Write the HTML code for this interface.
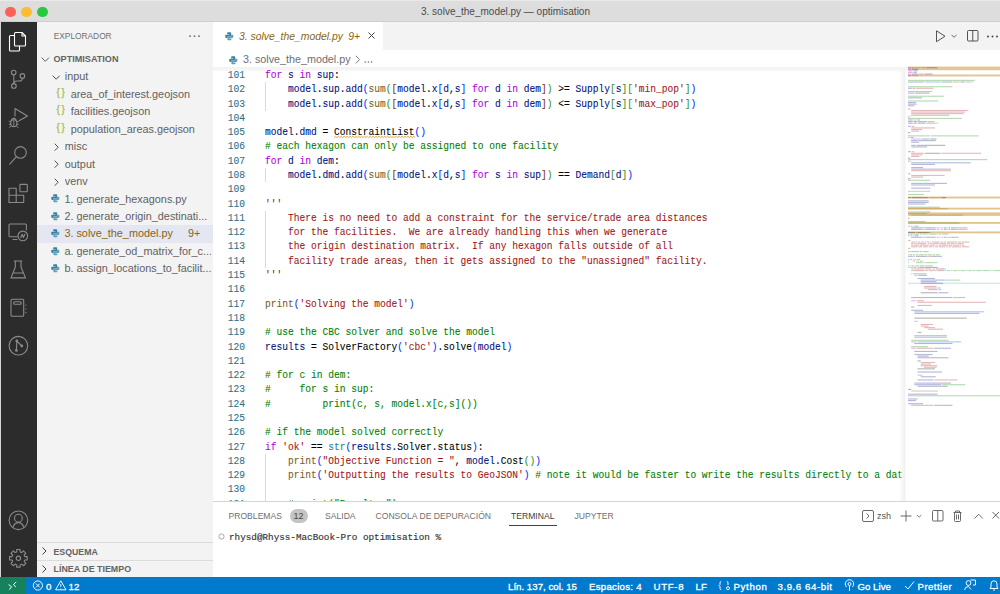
<!DOCTYPE html>
<html><head><meta charset="utf-8">
<style>
*{margin:0;padding:0;box-sizing:border-box}
html,body{width:1000px;height:594px;overflow:hidden;background:#fff;font-family:"Liberation Sans",sans-serif}
.a{position:absolute}
.t{position:absolute;white-space:pre;line-height:1}
svg{position:absolute;overflow:visible}
.ln{position:absolute;width:32px;transform:scaleY(1.15);-webkit-text-stroke:0.08px currentColor;text-align:right;color:#2d7088;font-family:"Liberation Mono",monospace;font-size:9.58px;line-height:14.29px;height:14.29px;white-space:pre}
.cl{position:absolute;transform:scaleY(1.15);-webkit-text-stroke:0.08px currentColor;color:#000;font-family:"Liberation Mono",monospace;font-size:9.58px;line-height:14.29px;height:14.29px;white-space:pre}
.k{color:#af00db}.v{color:#001080}.f{color:#795e26}.s{color:#a31515}.c{color:#008000}.ty{color:#267f99}
.b1{color:#0431fa}.b2{color:#319331}.b3{color:#7b3814}
.sq{text-decoration:underline wavy #bf8803;text-decoration-thickness:1px;text-underline-offset:2px}
.si{position:absolute;left:0;width:176px;height:17.46px;line-height:17.46px;font-size:10.85px;color:#616161;white-space:pre}
.st{position:absolute;top:0.6px;height:17px;line-height:17px;font-size:9.7px;color:#fff;white-space:pre;-webkit-text-stroke:0.3px #fff}
.pt{position:absolute;top:0;line-height:1;font-size:8.6px;color:#6f6f6f;white-space:pre}
</style></head><body>
<!-- title bar -->
<div class="a" style="left:0;top:0;width:1000px;height:22px;background:#dddddd;border-bottom:1px solid #cfcfcf"></div>
<div class="a" style="left:0;top:0;width:1000px;height:1px;background:#e9e9e9"></div>
<div class="a" style="left:5px;top:6.5px;width:10.5px;height:10.5px;border-radius:50%;background:#fe5f57"></div>
<div class="a" style="left:21px;top:6.5px;width:10.5px;height:10.5px;border-radius:50%;background:#febc2e"></div>
<div class="a" style="left:37px;top:6.5px;width:10.5px;height:10.5px;border-radius:50%;background:#28c840"></div>
<div class="t" style="left:421px;top:6.5px;font-size:10px;color:#4a4a4a">3. solve_the_model.py — optimisation</div>

<!-- activity bar -->
<div class="a" style="left:0;top:22px;width:37px;height:555px;background:#2c2c2c"></div>
<svg width="37" height="555" style="left:0;top:22px" fill="none" stroke-linecap="round" stroke-linejoin="round">
 <!-- explorer -->
 <g stroke="#ffffff" stroke-width="1.1">
  <path d="M14.5 13.5 H10.5 Q9.5 13.5 9.5 14.5 V28 Q9.5 29 10.5 29 H18.5 Q19.5 29 19.5 28 V24"/>
  <path d="M15.5 10.5 Q14.5 10.5 14.5 11.5 V23 Q14.5 24 15.5 24 H24.5 Q25.5 24 25.5 23 V14 L22 10.5 Z"/>
  <path d="M22 10.5 V14 H25.5"/>
 </g>
 <g stroke="#8b8b8b" stroke-width="1.1">
  <!-- source control y offset 22 -->
  <circle cx="13.7" cy="50.5" r="2.3"/><circle cx="22.4" cy="53.9" r="2.3"/><circle cx="13.9" cy="63.9" r="2.3"/>
  <path d="M13.8 52.8 V61.6"/><path d="M22.4 56.2 Q22.4 59 19 59 H16.5 Q14 59 13.9 61.5"/>
  <!-- run debug -->
  <path d="M15 94 V86.5 L27.4 94 L19.5 98.6"/>
  <path d="M11.6 97.6 Q13.8 95.2 16 97.6"/><ellipse cx="13.8" cy="101.2" rx="3.1" ry="3.5"/><path d="M9.2 99.3 H10.7 M16.9 99.3 H18.4 M9.2 102.3 H10.7 M16.9 102.3 H18.4 M10.8 104.3 L9.6 105.5 M16.8 104.3 L18 105.5 M13.8 98.5 V104.5" stroke-width="0.9"/>
  <!-- search -->
  <circle cx="20.5" cy="130.4" r="5.8"/><path d="M16.4 134.6 L9.8 142.2"/>
  <!-- extensions -->
  <path d="M9 166.2 H16.2 V173.2 H23.7 V180.5 H9 Z M9 173.2 H16.2 V180.5"/>
  <rect x="19.9" y="162.4" width="7.4" height="7.4" rx="0.8"/>
  <!-- remote explorer -->
  <path d="M17.5 214.8 H10 Q9 214.8 9 213.8 V203 Q9 202 10 202 H25.4 Q26.4 202 26.4 203 V208"/>
  <path d="M13 217.5 H17"/>
  <circle cx="22.8" cy="213.9" r="4.8"/><path d="M20.8 215.5 L22.2 212.2 L23.4 215.5 L24.8 212.2"/>
  <!-- testing -->
  <path d="M14.3 239 H21.8 M15.3 239 V245 L11 255.9 H25.5 L21 245 V239 M12.8 251 H23.5"/>
  <!-- notebook -->
  <rect x="11" y="277.3" width="12.7" height="16.9" rx="1.3"/><rect x="13.7" y="279.8" width="7.5" height="2.5" rx="1"/>
  <path d="M25.9 283 V283.3 M25.9 286.7 V287 M25.9 290.4 V290.7"/>
  <!-- graph -->
  <circle cx="18.4" cy="323.7" r="9.3"/><path d="M16.8 319 L16.4 328.4 M16.8 319 L21.8 324"/>
 </g>
 <g fill="#8b8b8b"><circle cx="16.8" cy="319" r="1.4"/><circle cx="21.8" cy="324" r="1.4"/><circle cx="16.4" cy="328.4" r="1.4"/></g>
 <g stroke="#8b8b8b" stroke-width="1.1">
  <!-- accounts -->
  <circle cx="18.4" cy="498.3" r="9.3"/><circle cx="18.4" cy="496.2" r="3.9"/><path d="M13.2 504.8 Q14.5 500.6 18.4 500.6 Q22.3 500.6 23.6 504.8"/>
  <!-- gear -->
  <path id="gear" d="M24.50 533.77 L24.78 534.59 L27.23 534.58 L27.23 538.02 L24.78 538.01 L24.50 538.83 L24.12 539.60 L25.86 541.33 L23.43 543.76 L21.70 542.02 L20.93 542.40 L20.11 542.68 L20.12 545.13 L16.68 545.13 L16.69 542.68 L15.87 542.40 L15.10 542.02 L13.37 543.76 L10.94 541.33 L12.68 539.60 L12.30 538.83 L12.02 538.01 L9.57 538.02 L9.57 534.58 L12.02 534.59 L12.30 533.77 L12.68 533.00 L10.94 531.27 L13.37 528.84 L15.10 530.58 L15.87 530.20 L16.69 529.92 L16.68 527.47 L20.12 527.47 L20.11 529.92 L20.93 530.20 L21.70 530.58 L23.43 528.84 L25.86 531.27 L24.12 533.00 Z"/>
  <circle cx="18.4" cy="536.3" r="2.2"/>
 </g>
</svg>

<div class="a" style="left:0;top:22px;width:1px;height:555px;background:#d6d6d6"></div>
<!-- sidebar -->
<div class="a" style="left:37px;top:22px;width:176px;height:555px;background:#f3f3f3;overflow:hidden">
 <div class="t" style="left:16.7px;top:9.6px;font-size:8.35px;color:#6f6f6f">EXPLORADOR</div>
 <svg width="20" height="6" style="left:151px;top:12.5px"><g fill="#6f6f6f"><circle cx="2" cy="1.2" r="0.9"/><circle cx="6.5" cy="1.2" r="0.9"/><circle cx="11" cy="1.2" r="0.9"/></g></svg>
 <!-- OPTIMISATION header -->
 <svg width="12" height="7" style="left:4.3px;top:34.6px" fill="none" stroke="#555" stroke-width="0.95"><path d="M0.6 0.6 L4.3 4.3 L8 0.6"/></svg>
 <div class="t" style="left:16.5px;top:32.5px;font-size:9.1px;font-weight:bold;color:#636363">OPTIMISATION</div>
 <!-- rows start at 45.3 (67.3 abs) -->
 <div class="a" style="left:0;top:202.9px;width:176px;height:17.9px;background:#e4e6f1"></div>
 <svg width="10" height="8" style="left:15px;top:53.10px" fill="none" stroke="#424242" stroke-width="0.95"><path d="M0.7 0.7 L4.2 4.2 L7.7 0.7"/></svg>
<div class="si" style="left:27.8px;top:46.30px;width:146.2px;color:#616161;overflow:hidden">input</div>
<div class="t" style="left:19.6px;top:65.96px;font-size:10px;color:#a9b94e;letter-spacing:1.6px;-webkit-text-stroke:0.25px #a9b94e">{}</div>
<div class="si" style="left:33.7px;top:63.76px;width:140.3px;color:#616161;overflow:hidden">area_of_interest.geojson</div>
<div class="t" style="left:19.6px;top:83.42px;font-size:10px;color:#a9b94e;letter-spacing:1.6px;-webkit-text-stroke:0.25px #a9b94e">{}</div>
<div class="si" style="left:33.7px;top:81.22px;width:140.3px;color:#616161;overflow:hidden">facilities.geojson</div>
<div class="t" style="left:19.6px;top:100.88000000000001px;font-size:10px;color:#a9b94e;letter-spacing:1.6px;-webkit-text-stroke:0.25px #a9b94e">{}</div>
<div class="si" style="left:33.7px;top:98.68px;width:140.3px;color:#616161;overflow:hidden">population_areas.geojson</div>
<svg width="8" height="10" style="left:16.5px;top:120.74px" fill="none" stroke="#424242" stroke-width="0.95"><path d="M0.7 0.7 L4.2 4.2 L0.7 7.7"/></svg>
<div class="si" style="left:27.8px;top:116.14px;width:146.2px;color:#616161;overflow:hidden">misc</div>
<svg width="8" height="10" style="left:16.5px;top:138.20px" fill="none" stroke="#424242" stroke-width="0.95"><path d="M0.7 0.7 L4.2 4.2 L0.7 7.7"/></svg>
<div class="si" style="left:27.8px;top:133.60px;width:146.2px;color:#616161;overflow:hidden">output</div>
<svg width="8" height="10" style="left:16.5px;top:155.66px" fill="none" stroke="#424242" stroke-width="0.95"><path d="M0.7 0.7 L4.2 4.2 L0.7 7.7"/></svg>
<div class="si" style="left:27.8px;top:151.06px;width:146.2px;color:#616161;overflow:hidden">venv</div>
<svg width="8.6" height="8.6" viewBox="0 0 16 16" style="left:13.6px;top:172.11999999999998px"><path fill="#3a82a0" d="M5.5 0.5 H10 Q11.5 0.5 11.5 2 V6.5 Q11.5 8 10 8 H6 Q4.5 8 4.5 9.5 V11 H2 Q0.5 11 0.5 9.5 V6.5 Q0.5 5 2 5 H8 V4 H4 V2 Q4 0.5 5.5 0.5 Z"/><path fill="#5e9fba" d="M10.5 15.5 H6 Q4.5 15.5 4.5 14 V9.5 Q4.5 8 6 8 H10 Q11.5 8 11.5 6.5 V5 H14 Q15.5 5 15.5 6.5 V9.5 Q15.5 11 14 11 H8 V12 H12 V14 Q12 15.5 10.5 15.5 Z"/></svg>
<div class="si" style="left:27.4px;top:168.52px;width:146.6px;color:#616161;overflow:hidden">1. generate_hexagons.py</div>
<svg width="8.6" height="8.6" viewBox="0 0 16 16" style="left:13.6px;top:189.58px"><path fill="#3a82a0" d="M5.5 0.5 H10 Q11.5 0.5 11.5 2 V6.5 Q11.5 8 10 8 H6 Q4.5 8 4.5 9.5 V11 H2 Q0.5 11 0.5 9.5 V6.5 Q0.5 5 2 5 H8 V4 H4 V2 Q4 0.5 5.5 0.5 Z"/><path fill="#5e9fba" d="M10.5 15.5 H6 Q4.5 15.5 4.5 14 V9.5 Q4.5 8 6 8 H10 Q11.5 8 11.5 6.5 V5 H14 Q15.5 5 15.5 6.5 V9.5 Q15.5 11 14 11 H8 V12 H12 V14 Q12 15.5 10.5 15.5 Z"/></svg>
<div class="si" style="left:27.4px;top:185.98px;width:146.6px;color:#616161;overflow:hidden">2. generate_origin_destinati...</div>
<svg width="8.6" height="8.6" viewBox="0 0 16 16" style="left:13.6px;top:207.04px"><path fill="#3a82a0" d="M5.5 0.5 H10 Q11.5 0.5 11.5 2 V6.5 Q11.5 8 10 8 H6 Q4.5 8 4.5 9.5 V11 H2 Q0.5 11 0.5 9.5 V6.5 Q0.5 5 2 5 H8 V4 H4 V2 Q4 0.5 5.5 0.5 Z"/><path fill="#5e9fba" d="M10.5 15.5 H6 Q4.5 15.5 4.5 14 V9.5 Q4.5 8 6 8 H10 Q11.5 8 11.5 6.5 V5 H14 Q15.5 5 15.5 6.5 V9.5 Q15.5 11 14 11 H8 V12 H12 V14 Q12 15.5 10.5 15.5 Z"/></svg>
<div class="si" style="left:27.4px;top:203.44px;width:146.6px;color:#876515;overflow:hidden">3. solve_the_model.py</div>
<div class="si" style="left:151px;top:203.44px;width:20px;color:#876515">9+</div>
<svg width="8.6" height="8.6" viewBox="0 0 16 16" style="left:13.6px;top:224.50000000000003px"><path fill="#3a82a0" d="M5.5 0.5 H10 Q11.5 0.5 11.5 2 V6.5 Q11.5 8 10 8 H6 Q4.5 8 4.5 9.5 V11 H2 Q0.5 11 0.5 9.5 V6.5 Q0.5 5 2 5 H8 V4 H4 V2 Q4 0.5 5.5 0.5 Z"/><path fill="#5e9fba" d="M10.5 15.5 H6 Q4.5 15.5 4.5 14 V9.5 Q4.5 8 6 8 H10 Q11.5 8 11.5 6.5 V5 H14 Q15.5 5 15.5 6.5 V9.5 Q15.5 11 14 11 H8 V12 H12 V14 Q12 15.5 10.5 15.5 Z"/></svg>
<div class="si" style="left:27.4px;top:220.90px;width:146.6px;color:#616161;overflow:hidden">a. generate_od_matrix_for_c...</div>
<svg width="8.6" height="8.6" viewBox="0 0 16 16" style="left:13.6px;top:241.96px"><path fill="#3a82a0" d="M5.5 0.5 H10 Q11.5 0.5 11.5 2 V6.5 Q11.5 8 10 8 H6 Q4.5 8 4.5 9.5 V11 H2 Q0.5 11 0.5 9.5 V6.5 Q0.5 5 2 5 H8 V4 H4 V2 Q4 0.5 5.5 0.5 Z"/><path fill="#5e9fba" d="M10.5 15.5 H6 Q4.5 15.5 4.5 14 V9.5 Q4.5 8 6 8 H10 Q11.5 8 11.5 6.5 V5 H14 Q15.5 5 15.5 6.5 V9.5 Q15.5 11 14 11 H8 V12 H12 V14 Q12 15.5 10.5 15.5 Z"/></svg>
<div class="si" style="left:27.4px;top:238.36px;width:146.6px;color:#616161;overflow:hidden">b. assign_locations_to_facilit...</div>
 <!-- bottom sections -->
 <div class="a" style="left:0;top:519.5px;width:176px;height:1px;background:#dcdcdc"></div>
 <svg width="10" height="10" style="left:5px;top:525px" fill="none" stroke="#424242" stroke-width="1"><path d="M0.5 0.5 L4 4 L0.5 7.5"/></svg>
 <div class="t" style="left:16.5px;top:525.5px;font-size:8.75px;font-weight:bold;color:#636363">ESQUEMA</div>
 <div class="a" style="left:0;top:537.5px;width:176px;height:1px;background:#dcdcdc"></div>
 <svg width="10" height="10" style="left:5px;top:542.5px" fill="none" stroke="#424242" stroke-width="1"><path d="M0.5 0.5 L4 4 L0.5 7.5"/></svg>
 <div class="t" style="left:16.5px;top:543px;font-size:8.9px;font-weight:bold;color:#636363">LÍNEA DE TIEMPO</div>
</div>

<!-- editor tabs -->
<div class="a" style="left:213px;top:22px;width:787px;height:28px;background:#f3f3f3"></div>
<div class="a" style="left:213px;top:22px;width:170px;height:28px;background:#ffffff"></div>
<svg width="8.6" height="8.6" viewBox="0 0 16 16" style="left:224.5px;top:32.3px"><path fill="#3a82a0" d="M5.5 0.5 H10 Q11.5 0.5 11.5 2 V6.5 Q11.5 8 10 8 H6 Q4.5 8 4.5 9.5 V11 H2 Q0.5 11 0.5 9.5 V6.5 Q0.5 5 2 5 H8 V4 H4 V2 Q4 0.5 5.5 0.5 Z"/><path fill="#5e9fba" d="M10.5 15.5 H6 Q4.5 15.5 4.5 14 V9.5 Q4.5 8 6 8 H10 Q11.5 8 11.5 6.5 V5 H14 Q15.5 5 15.5 6.5 V9.5 Q15.5 11 14 11 H8 V12 H12 V14 Q12 15.5 10.5 15.5 Z"/></svg>
<div class="t" style="left:239px;top:32px;font-size:10.4px;font-style:italic;color:#876515">3. solve_the_model.py</div>
<div class="t" style="left:348.3px;top:32px;font-size:10.4px;font-style:italic;color:#876515">9+</div>
<svg width="8" height="8" style="left:368px;top:32.2px" fill="none" stroke="#424242" stroke-width="1"><path d="M0.5 0.5 L6.5 6.5 M6.5 0.5 L0.5 6.5"/></svg>
<!-- editor actions -->
<svg width="70" height="16" style="left:930px;top:28px" fill="none" stroke="#4a4a4a" stroke-width="0.95">
 <path d="M6.5 2.8 V13.7 L15 8.25 Z"/>
 <path d="M21.5 6.8 L24 9.3 L26.5 6.8" stroke-width="0.8"/>
 <rect x="37.5" y="2.5" width="10.5" height="10.5" rx="1"/><path d="M42.75 2.5 V13"/>
</svg>
<svg width="14" height="4" style="left:986px;top:34.5px"><g fill="#424242"><circle cx="2" cy="1.5" r="0.95"/><circle cx="6.5" cy="1.5" r="0.95"/><circle cx="11" cy="1.5" r="0.95"/></g></svg>
<!-- breadcrumbs -->
<div class="a" style="left:213px;top:50px;width:787px;height:17px;background:#fff"></div>
<svg width="8.6" height="8.6" viewBox="0 0 16 16" style="left:229px;top:55.5px"><path fill="#3a82a0" d="M5.5 0.5 H10 Q11.5 0.5 11.5 2 V6.5 Q11.5 8 10 8 H6 Q4.5 8 4.5 9.5 V11 H2 Q0.5 11 0.5 9.5 V6.5 Q0.5 5 2 5 H8 V4 H4 V2 Q4 0.5 5.5 0.5 Z"/><path fill="#5e9fba" d="M10.5 15.5 H6 Q4.5 15.5 4.5 14 V9.5 Q4.5 8 6 8 H10 Q11.5 8 11.5 6.5 V5 H14 Q15.5 5 15.5 6.5 V9.5 Q15.5 11 14 11 H8 V12 H12 V14 Q12 15.5 10.5 15.5 Z"/></svg>
<div class="t" style="left:243px;top:54px;font-size:10.75px;color:#6e6e6e">3. solve_the_model.py</div>
<svg width="8" height="10" style="left:355px;top:55px" fill="none" stroke="#6e6e6e" stroke-width="0.9"><path d="M0.8 0.8 L4.6 4.6 L0.8 8.4"/></svg>
<svg width="10" height="3" style="left:364px;top:60.5px"><g fill="#6e6e6e"><circle cx="1.2" cy="1" r="0.8"/><circle cx="4.4" cy="1" r="0.8"/><circle cx="7.6" cy="1" r="0.8"/></g></svg>

<!-- code -->
<div class="a" style="left:213px;top:67px;width:692px;height:434px;overflow:hidden;background:#fff">
<div class="ln" style="left:0;top:2.00px">101</div>
<div class="cl" style="left:52px;top:2.00px"><span class="k">for</span> <span class="v">s</span> <span class="k">in</span> <span class="v">sup</span>:</div>
<div class="ln" style="left:0;top:16.29px">102</div>
<div class="a" style="left:52px;top:14.99px;width:1px;height:14.59px;background:#dadada"></div>
<div class="cl" style="left:52px;top:16.29px">    <span class="v">model</span>.<span class="v">sup</span>.<span class="v">add</span><span class="b1">(</span><span class="f">sum</span><span class="b2">(</span><span class="b3">[</span><span class="v">model</span>.<span class="v">x</span><span class="b1">[</span><span class="v">d</span>,<span class="v">s</span><span class="b1">]</span> <span class="k">for</span> <span class="v">d</span> <span class="k">in</span> <span class="v">dem</span><span class="b3">]</span><span class="b2">)</span> &gt;= <span class="v">Supply</span><span class="b2">[</span><span class="v">s</span><span class="b2">]</span><span class="b2">[</span><span class="s">'min_pop'</span><span class="b2">]</span><span class="b1">)</span></div>
<div class="ln" style="left:0;top:30.58px">103</div>
<div class="a" style="left:52px;top:29.28px;width:1px;height:14.59px;background:#dadada"></div>
<div class="cl" style="left:52px;top:30.58px">    <span class="v">model</span>.<span class="v">sup</span>.<span class="v">add</span><span class="b1">(</span><span class="f">sum</span><span class="b2">(</span><span class="b3">[</span><span class="v">model</span>.<span class="v">x</span><span class="b1">[</span><span class="v">d</span>,<span class="v">s</span><span class="b1">]</span> <span class="k">for</span> <span class="v">d</span> <span class="k">in</span> <span class="v">dem</span><span class="b3">]</span><span class="b2">)</span> &lt;= <span class="v">Supply</span><span class="b2">[</span><span class="v">s</span><span class="b2">]</span><span class="b2">[</span><span class="s">'max_pop'</span><span class="b2">]</span><span class="b1">)</span></div>
<div class="ln" style="left:0;top:44.87px">104</div>
<div class="cl" style="left:52px;top:44.87px"></div>
<div class="ln" style="left:0;top:59.16px">105</div>
<div class="cl" style="left:52px;top:59.16px"><span class="v">model</span>.<span class="v">dmd</span> = ConstraintList<span class="b1">()</span></div>
<div class="ln" style="left:0;top:73.45px">106</div>
<div class="cl" style="left:52px;top:73.45px"><span class="c"># each hexagon can only be assigned to one facility</span></div>
<div class="ln" style="left:0;top:87.74px">107</div>
<div class="cl" style="left:52px;top:87.74px"><span class="k">for</span> <span class="v">d</span> <span class="k">in</span> <span class="v">dem</span>:</div>
<div class="ln" style="left:0;top:102.03px">108</div>
<div class="a" style="left:52px;top:100.73px;width:1px;height:14.59px;background:#dadada"></div>
<div class="cl" style="left:52px;top:102.03px">    <span class="v">model</span>.<span class="v">dmd</span>.<span class="v">add</span><span class="b1">(</span><span class="f">sum</span><span class="b2">(</span><span class="b3">[</span><span class="v">model</span>.<span class="v">x</span><span class="b1">[</span><span class="v">d</span>,<span class="v">s</span><span class="b1">]</span> <span class="k">for</span> <span class="v">s</span> <span class="k">in</span> <span class="v">sup</span><span class="b3">]</span><span class="b2">)</span> == <span class="v">Demand</span><span class="b2">[</span><span class="v">d</span><span class="b2">]</span><span class="b1">)</span></div>
<div class="ln" style="left:0;top:116.32px">109</div>
<div class="cl" style="left:52px;top:116.32px"></div>
<div class="ln" style="left:0;top:130.61px">110</div>
<div class="cl" style="left:52px;top:130.61px"><span class="s">'''</span></div>
<div class="ln" style="left:0;top:144.90px">111</div>
<div class="a" style="left:52px;top:143.60px;width:1px;height:14.59px;background:#dadada"></div>
<div class="cl" style="left:52px;top:144.90px"><span class="s">    There is no need to add a constraint for the service/trade area distances</span></div>
<div class="ln" style="left:0;top:159.19px">112</div>
<div class="a" style="left:52px;top:157.89px;width:1px;height:14.59px;background:#dadada"></div>
<div class="cl" style="left:52px;top:159.19px"><span class="s">    for the facilities.  We are already handling this when we generate</span></div>
<div class="ln" style="left:0;top:173.48px">113</div>
<div class="a" style="left:52px;top:172.18px;width:1px;height:14.59px;background:#dadada"></div>
<div class="cl" style="left:52px;top:173.48px"><span class="s">    the origin destination matrix.  If any hexagon falls outside of all</span></div>
<div class="ln" style="left:0;top:187.77px">114</div>
<div class="a" style="left:52px;top:186.47px;width:1px;height:14.59px;background:#dadada"></div>
<div class="cl" style="left:52px;top:187.77px"><span class="s">    facility trade areas, then it gets assigned to the "unassigned" facility.</span></div>
<div class="ln" style="left:0;top:202.06px">115</div>
<div class="cl" style="left:52px;top:202.06px"><span class="s">'''</span></div>
<div class="ln" style="left:0;top:216.35px">116</div>
<div class="cl" style="left:52px;top:216.35px"></div>
<div class="ln" style="left:0;top:230.64px">117</div>
<div class="cl" style="left:52px;top:230.64px"><span class="f">print</span><span class="b1">(</span><span class="s">'Solving the model'</span><span class="b1">)</span></div>
<div class="ln" style="left:0;top:244.93px">118</div>
<div class="cl" style="left:52px;top:244.93px"></div>
<div class="ln" style="left:0;top:259.22px">119</div>
<div class="cl" style="left:52px;top:259.22px"><span class="c"># use the CBC solver and solve the model</span></div>
<div class="ln" style="left:0;top:273.51px">120</div>
<div class="cl" style="left:52px;top:273.51px"><span class="v">results</span> = SolverFactory<span class="b1">(</span><span class="s">'cbc'</span><span class="b1">)</span>.solve<span class="b1">(</span><span class="v">model</span><span class="b1">)</span></div>
<div class="ln" style="left:0;top:287.80px">121</div>
<div class="cl" style="left:52px;top:287.80px"></div>
<div class="ln" style="left:0;top:302.09px">122</div>
<div class="cl" style="left:52px;top:302.09px"><span class="c"># for c in dem:</span></div>
<div class="ln" style="left:0;top:316.38px">123</div>
<div class="cl" style="left:52px;top:316.38px"><span class="c">#     for s in sup:</span></div>
<div class="ln" style="left:0;top:330.67px">124</div>
<div class="cl" style="left:52px;top:330.67px"><span class="c">#         print(c, s, model.x[c,s]())</span></div>
<div class="ln" style="left:0;top:344.96px">125</div>
<div class="cl" style="left:52px;top:344.96px"></div>
<div class="ln" style="left:0;top:359.25px">126</div>
<div class="cl" style="left:52px;top:359.25px"><span class="c"># if the model solved correctly</span></div>
<div class="ln" style="left:0;top:373.54px">127</div>
<div class="cl" style="left:52px;top:373.54px"><span class="k">if</span> <span class="s">'ok'</span> == <span class="ty">str</span><span class="b1">(</span><span class="v">results</span>.Solver.status<span class="b1">)</span>:</div>
<div class="ln" style="left:0;top:387.83px">128</div>
<div class="a" style="left:52px;top:386.53px;width:1px;height:14.59px;background:#dadada"></div>
<div class="cl" style="left:52px;top:387.83px">    <span class="f">print</span><span class="b1">(</span><span class="s">"Objective Function = "</span>, <span class="v">model</span>.Cost<span class="b2">()</span><span class="b1">)</span></div>
<div class="ln" style="left:0;top:402.12px">129</div>
<div class="a" style="left:52px;top:400.82px;width:1px;height:14.59px;background:#dadada"></div>
<div class="cl" style="left:52px;top:402.12px">    <span class="f">print</span><span class="b1">(</span><span class="s">'Outputting the results to GeoJSON'</span><span class="b1">)</span> <span class="c"># note it would be faster to write the results directly to a database</span></div>
<div class="ln" style="left:0;top:416.41px">130</div>
<div class="a" style="left:52px;top:415.11px;width:1px;height:14.59px;background:#dadada"></div>
<div class="cl" style="left:52px;top:416.41px"></div>
<div class="ln" style="left:0;top:430.70px">131</div>
<div class="a" style="left:52px;top:429.40px;width:1px;height:14.59px;background:#dadada"></div>
<div class="cl" style="left:52px;top:430.70px">    <span class="c"># print("Results:")</span></div>
<svg width="84" height="3" style="left:121px;top:68.9px" fill="none"><polyline points="0.00,1.6 1.45,0.2 2.90,1.6 4.35,0.2 5.80,1.6 7.25,0.2 8.70,1.6 10.15,0.2 11.60,1.6 13.05,0.2 14.50,1.6 15.95,0.2 17.40,1.6 18.85,0.2 20.30,1.6 21.75,0.2 23.20,1.6 24.65,0.2 26.10,1.6 27.55,0.2 29.00,1.6 30.45,0.2 31.90,1.6 33.35,0.2 34.80,1.6 36.25,0.2 37.70,1.6 39.15,0.2 40.60,1.6 42.05,0.2 43.50,1.6 44.95,0.2 46.40,1.6 47.85,0.2 49.30,1.6 50.75,0.2 52.20,1.6 53.65,0.2 55.10,1.6 56.55,0.2 58.00,1.6 59.45,0.2 60.90,1.6 62.35,0.2 63.80,1.6 65.25,0.2 66.70,1.6 68.15,0.2 69.60,1.6 71.05,0.2 72.50,1.6 73.95,0.2 75.40,1.6 76.85,0.2 78.30,1.6 79.75,0.2 81.20,1.6" stroke="#e0a444" stroke-width="1"/></svg>
</div>
<div class="a" style="left:213px;top:66.5px;width:787px;height:5px;background:linear-gradient(rgba(0,0,0,0.05),rgba(0,0,0,0.035) 60%,rgba(0,0,0,0))"></div>
<!-- minimap -->
<div class="a" style="left:899px;top:67px;width:7px;height:434px;background:linear-gradient(to right,rgba(255,255,255,0),rgba(244,244,244,0.9) 60%,rgba(240,240,240,1) 85%,rgba(255,255,255,0))"></div>
<svg width="92" height="434" style="left:907.8px;top:67.2px">
<rect x="0" y="-0.40" width="92.2" height="1.89" fill="#e2c48e"/>
<rect x="0" y="1.19" width="92.2" height="1.89" fill="#e2c48e"/>
<rect x="0" y="7.52" width="92.2" height="1.89" fill="#e2c48e"/>
<rect x="0" y="129.57" width="92.2" height="1.89" fill="#e2c48e"/>
<rect x="0" y="140.66" width="92.2" height="1.89" fill="#e2c48e"/>
<rect x="0" y="145.42" width="92.2" height="1.89" fill="#e2c48e"/>
<rect x="0" y="147.00" width="92.2" height="1.89" fill="#e2c48e"/>
<rect x="0" y="154.93" width="92.2" height="1.89" fill="#e2c48e"/>
<rect x="0" y="164.44" width="92.2" height="1.89" fill="#e2c48e"/>
<rect x="0" y="215.56" width="92.2" height="1.58" fill="#dce6f3"/>
<rect x="0.00" y="0.15" width="3.18" height="1.1" fill="#af00db" fill-opacity="0.3"/>
<rect x="3.97" y="0.15" width="0.79" height="1.1" fill="#000000" fill-opacity="0.3"/>
<rect x="5.56" y="0.15" width="7.94" height="1.1" fill="#9a6a00" fill-opacity="0.3"/>
<rect x="14.29" y="0.15" width="3.18" height="1.1" fill="#af00db" fill-opacity="0.3"/>
<rect x="18.26" y="0.15" width="11.12" height="1.1" fill="#001080" fill-opacity="0.3"/>
<rect x="0.00" y="1.73" width="3.18" height="1.1" fill="#af00db" fill-opacity="0.3"/>
<rect x="3.97" y="1.73" width="6.35" height="1.1" fill="#001080" fill-opacity="0.3"/>
<rect x="0.00" y="3.32" width="4.76" height="1.1" fill="#af00db" fill-opacity="0.3"/>
<rect x="5.56" y="3.32" width="3.97" height="1.1" fill="#001080" fill-opacity="0.3"/>
<rect x="0.00" y="4.91" width="4.76" height="1.1" fill="#af00db" fill-opacity="0.3"/>
<rect x="5.56" y="4.91" width="3.18" height="1.1" fill="#001080" fill-opacity="0.3"/>
<rect x="0.00" y="6.49" width="3.18" height="1.1" fill="#af00db" fill-opacity="0.3"/>
<rect x="3.97" y="6.49" width="6.35" height="1.1" fill="#001080" fill-opacity="0.3"/>
<rect x="11.12" y="6.49" width="4.76" height="1.1" fill="#af00db" fill-opacity="0.3"/>
<rect x="16.67" y="6.49" width="7.94" height="1.1" fill="#001080" fill-opacity="0.3"/>
<rect x="0.00" y="8.07" width="3.18" height="1.1" fill="#af00db" fill-opacity="0.3"/>
<rect x="3.97" y="8.07" width="6.35" height="1.1" fill="#9a6a00" fill-opacity="0.3"/>
<rect x="0.00" y="12.83" width="66.70" height="1.1" fill="#008000" fill-opacity="0.3"/>
<rect x="0.00" y="14.42" width="15.88" height="1.1" fill="#001080" fill-opacity="0.3"/>
<rect x="16.67" y="14.42" width="15.88" height="1.1" fill="#0431fa" fill-opacity="0.3"/>
<rect x="33.35" y="14.42" width="11.12" height="1.1" fill="#001080" fill-opacity="0.3"/>
<rect x="45.26" y="14.42" width="6.35" height="1.1" fill="#a31515" fill-opacity="0.3"/>
<rect x="52.40" y="14.42" width="4.76" height="1.1" fill="#001080" fill-opacity="0.3"/>
<rect x="57.96" y="14.42" width="4.76" height="1.1" fill="#a31515" fill-opacity="0.3"/>
<rect x="63.52" y="14.42" width="1.59" height="1.1" fill="#0431fa" fill-opacity="0.3"/>
<rect x="0.00" y="19.17" width="44.46" height="1.1" fill="#008000" fill-opacity="0.3"/>
<rect x="0.00" y="20.75" width="3.97" height="1.1" fill="#001080" fill-opacity="0.3"/>
<rect x="4.76" y="20.75" width="2.38" height="1.1" fill="#000000" fill-opacity="0.3"/>
<rect x="7.94" y="20.75" width="17.47" height="1.1" fill="#a31515" fill-opacity="0.3"/>
<rect x="0.00" y="23.92" width="23.82" height="1.1" fill="#008000" fill-opacity="0.3"/>
<rect x="0.00" y="25.51" width="6.35" height="1.1" fill="#001080" fill-opacity="0.3"/>
<rect x="7.15" y="25.51" width="14.29" height="1.1" fill="#000000" fill-opacity="0.3"/>
<rect x="0.00" y="28.68" width="35.73" height="1.1" fill="#008000" fill-opacity="0.3"/>
<rect x="0.00" y="30.26" width="14.29" height="1.1" fill="#001080" fill-opacity="0.3"/>
<rect x="0.00" y="33.43" width="30.17" height="1.1" fill="#008000" fill-opacity="0.3"/>
<rect x="0.00" y="35.02" width="7.94" height="1.1" fill="#001080" fill-opacity="0.3"/>
<rect x="0.00" y="36.60" width="8.73" height="1.1" fill="#001080" fill-opacity="0.3"/>
<rect x="0.00" y="38.19" width="6.35" height="1.1" fill="#001080" fill-opacity="0.3"/>
<rect x="0.00" y="41.36" width="2.38" height="1.1" fill="#a31515" fill-opacity="0.3"/>
<rect x="3.18" y="42.95" width="57.17" height="1.1" fill="#a31515" fill-opacity="0.3"/>
<rect x="3.18" y="44.53" width="53.99" height="1.1" fill="#a31515" fill-opacity="0.3"/>
<rect x="3.18" y="46.11" width="52.40" height="1.1" fill="#a31515" fill-opacity="0.3"/>
<rect x="3.18" y="47.70" width="38.11" height="1.1" fill="#a31515" fill-opacity="0.3"/>
<rect x="0.00" y="49.28" width="2.38" height="1.1" fill="#a31515" fill-opacity="0.3"/>
<rect x="0.00" y="50.87" width="53.99" height="1.1" fill="#008000" fill-opacity="0.3"/>
<rect x="0.00" y="52.45" width="4.76" height="1.1" fill="#001080" fill-opacity="0.3"/>
<rect x="5.56" y="52.45" width="2.38" height="1.1" fill="#a31515" fill-opacity="0.3"/>
<rect x="8.73" y="52.45" width="3.18" height="1.1" fill="#001080" fill-opacity="0.3"/>
<rect x="0.00" y="54.04" width="4.76" height="1.1" fill="#001080" fill-opacity="0.3"/>
<rect x="5.56" y="54.04" width="3.18" height="1.1" fill="#000000" fill-opacity="0.3"/>
<rect x="9.53" y="54.04" width="9.53" height="1.1" fill="#001080" fill-opacity="0.3"/>
<rect x="19.85" y="54.04" width="6.35" height="1.1" fill="#a31515" fill-opacity="0.3"/>
<rect x="0.00" y="55.62" width="4.76" height="1.1" fill="#001080" fill-opacity="0.3"/>
<rect x="5.56" y="55.62" width="3.18" height="1.1" fill="#000000" fill-opacity="0.3"/>
<rect x="9.53" y="55.62" width="7.94" height="1.1" fill="#001080" fill-opacity="0.3"/>
<rect x="18.26" y="55.62" width="9.53" height="1.1" fill="#a31515" fill-opacity="0.3"/>
<rect x="28.58" y="55.62" width="1.59" height="1.1" fill="#0431fa" fill-opacity="0.3"/>
<rect x="0.00" y="58.79" width="3.18" height="1.1" fill="#001080" fill-opacity="0.3"/>
<rect x="3.97" y="58.79" width="2.38" height="1.1" fill="#a31515" fill-opacity="0.3"/>
<rect x="3.18" y="60.38" width="23.82" height="1.1" fill="#a31515" fill-opacity="0.3"/>
<rect x="3.18" y="61.96" width="11.12" height="1.1" fill="#a31515" fill-opacity="0.3"/>
<rect x="3.18" y="63.55" width="7.94" height="1.1" fill="#a31515" fill-opacity="0.3"/>
<rect x="0.00" y="65.14" width="2.38" height="1.1" fill="#000000" fill-opacity="0.3"/>
<rect x="0.00" y="68.31" width="22.23" height="1.1" fill="#008000" fill-opacity="0.3"/>
<rect x="23.03" y="68.31" width="47.64" height="1.1" fill="#008000" fill-opacity="0.3"/>
<rect x="0.00" y="69.89" width="1.59" height="1.1" fill="#af00db" fill-opacity="0.3"/>
<rect x="2.38" y="69.89" width="3.18" height="1.1" fill="#001080" fill-opacity="0.3"/>
<rect x="3.18" y="71.48" width="9.53" height="1.1" fill="#af00db" fill-opacity="0.3"/>
<rect x="13.50" y="71.48" width="7.94" height="1.1" fill="#001080" fill-opacity="0.3"/>
<rect x="22.23" y="71.48" width="6.35" height="1.1" fill="#000000" fill-opacity="0.3"/>
<rect x="3.18" y="73.06" width="6.35" height="1.1" fill="#001080" fill-opacity="0.3"/>
<rect x="10.32" y="73.06" width="17.47" height="1.1" fill="#001080" fill-opacity="0.3"/>
<rect x="3.18" y="74.65" width="7.94" height="1.1" fill="#001080" fill-opacity="0.3"/>
<rect x="3.18" y="77.81" width="4.76" height="1.1" fill="#001080" fill-opacity="0.3"/>
<rect x="8.73" y="77.81" width="28.58" height="1.1" fill="#000000" fill-opacity="0.3"/>
<rect x="3.18" y="79.40" width="15.88" height="1.1" fill="#001080" fill-opacity="0.3"/>
<rect x="0.00" y="84.16" width="3.18" height="1.1" fill="#001080" fill-opacity="0.3"/>
<rect x="3.97" y="84.16" width="2.38" height="1.1" fill="#a31515" fill-opacity="0.3"/>
<rect x="3.18" y="85.74" width="12.70" height="1.1" fill="#a31515" fill-opacity="0.3"/>
<rect x="16.67" y="85.74" width="15.88" height="1.1" fill="#000000" fill-opacity="0.3"/>
<rect x="33.35" y="85.74" width="39.70" height="1.1" fill="#a31515" fill-opacity="0.3"/>
<rect x="3.18" y="87.33" width="11.12" height="1.1" fill="#a31515" fill-opacity="0.3"/>
<rect x="3.18" y="88.91" width="7.94" height="1.1" fill="#a31515" fill-opacity="0.3"/>
<rect x="0.00" y="90.50" width="2.38" height="1.1" fill="#000000" fill-opacity="0.3"/>
<rect x="0.00" y="92.08" width="79.40" height="1.1" fill="#008000" fill-opacity="0.3"/>
<rect x="0.00" y="93.67" width="1.59" height="1.1" fill="#000000" fill-opacity="0.3"/>
<rect x="2.38" y="93.67" width="0.79" height="1.1" fill="#001080" fill-opacity="0.3"/>
<rect x="3.18" y="95.25" width="59.55" height="1.1" fill="#001080" fill-opacity="0.3"/>
<rect x="3.18" y="96.84" width="23.82" height="1.1" fill="#001080" fill-opacity="0.3"/>
<rect x="3.18" y="100.01" width="11.91" height="1.1" fill="#001080" fill-opacity="0.3"/>
<rect x="3.18" y="101.59" width="39.70" height="1.1" fill="#001080" fill-opacity="0.3"/>
<rect x="3.18" y="103.17" width="39.70" height="1.1" fill="#a31515" fill-opacity="0.3"/>
<rect x="0.00" y="106.34" width="2.38" height="1.1" fill="#001080" fill-opacity="0.3"/>
<rect x="3.18" y="107.93" width="33.35" height="1.1" fill="#a31515" fill-opacity="0.3"/>
<rect x="3.18" y="109.52" width="11.91" height="1.1" fill="#a31515" fill-opacity="0.3"/>
<rect x="0.00" y="111.10" width="2.38" height="1.1" fill="#000000" fill-opacity="0.3"/>
<rect x="0.00" y="112.69" width="22.23" height="1.1" fill="#008000" fill-opacity="0.3"/>
<rect x="3.18" y="115.86" width="35.73" height="1.1" fill="#001080" fill-opacity="0.3"/>
<rect x="3.18" y="117.44" width="23.82" height="1.1" fill="#001080" fill-opacity="0.3"/>
<rect x="3.18" y="120.61" width="19.06" height="1.1" fill="#001080" fill-opacity="0.3"/>
<rect x="0.00" y="123.78" width="22.23" height="1.1" fill="#795e26" fill-opacity="0.3"/>
<rect x="0.00" y="126.95" width="15.88" height="1.1" fill="#008000" fill-opacity="0.3"/>
<rect x="0.00" y="130.12" width="3.18" height="1.1" fill="#001080" fill-opacity="0.3"/>
<rect x="3.97" y="130.12" width="15.88" height="1.1" fill="#000000" fill-opacity="0.3"/>
<rect x="20.64" y="130.12" width="11.91" height="1.1" fill="#9a6a00" fill-opacity="0.3"/>
<rect x="33.35" y="130.12" width="4.76" height="1.1" fill="#000000" fill-opacity="0.3"/>
<rect x="0.00" y="133.29" width="20.64" height="1.1" fill="#001080" fill-opacity="0.3"/>
<rect x="0.00" y="134.88" width="20.64" height="1.1" fill="#001080" fill-opacity="0.3"/>
<rect x="0.00" y="136.46" width="17.47" height="1.1" fill="#001080" fill-opacity="0.3"/>
<rect x="0.00" y="139.63" width="31.76" height="1.1" fill="#008000" fill-opacity="0.3"/>
<rect x="0.00" y="141.22" width="39.70" height="1.1" fill="#9a6a00" fill-opacity="0.3"/>
<rect x="0.00" y="144.38" width="22.23" height="1.1" fill="#008000" fill-opacity="0.3"/>
<rect x="0.00" y="145.97" width="19.06" height="1.1" fill="#9a6a00" fill-opacity="0.3"/>
<rect x="3.18" y="147.56" width="51.61" height="1.1" fill="#9a6a00" fill-opacity="0.3"/>
<rect x="0.00" y="150.72" width="1.59" height="1.1" fill="#000000" fill-opacity="0.3"/>
<rect x="0.00" y="153.90" width="17.47" height="1.1" fill="#008000" fill-opacity="0.3"/>
<rect x="0.00" y="155.48" width="51.61" height="1.1" fill="#008000" fill-opacity="0.3"/>
<rect x="0.00" y="158.65" width="2.38" height="1.1" fill="#af00db" fill-opacity="0.3"/>
<rect x="3.18" y="158.65" width="0.79" height="1.1" fill="#001080" fill-opacity="0.3"/>
<rect x="4.76" y="158.65" width="1.59" height="1.1" fill="#af00db" fill-opacity="0.3"/>
<rect x="7.15" y="158.65" width="2.38" height="1.1" fill="#001080" fill-opacity="0.3"/>
<rect x="9.53" y="158.65" width="0.79" height="1.1" fill="#000000" fill-opacity="0.3"/>
<rect x="3.18" y="160.24" width="3.97" height="1.1" fill="#001080" fill-opacity="0.3"/>
<rect x="7.15" y="160.24" width="0.79" height="1.1" fill="#000000" fill-opacity="0.3"/>
<rect x="7.94" y="160.24" width="2.38" height="1.1" fill="#001080" fill-opacity="0.3"/>
<rect x="10.32" y="160.24" width="0.79" height="1.1" fill="#000000" fill-opacity="0.3"/>
<rect x="11.12" y="160.24" width="2.38" height="1.1" fill="#001080" fill-opacity="0.3"/>
<rect x="13.50" y="160.24" width="0.79" height="1.1" fill="#0431fa" fill-opacity="0.3"/>
<rect x="14.29" y="160.24" width="2.38" height="1.1" fill="#795e26" fill-opacity="0.3"/>
<rect x="16.67" y="160.24" width="0.79" height="1.1" fill="#008000" fill-opacity="0.3"/>
<rect x="17.47" y="160.24" width="0.79" height="1.1" fill="#795e26" fill-opacity="0.3"/>
<rect x="18.26" y="160.24" width="3.97" height="1.1" fill="#001080" fill-opacity="0.3"/>
<rect x="22.23" y="160.24" width="0.79" height="1.1" fill="#000000" fill-opacity="0.3"/>
<rect x="23.03" y="160.24" width="0.79" height="1.1" fill="#001080" fill-opacity="0.3"/>
<rect x="23.82" y="160.24" width="0.79" height="1.1" fill="#0431fa" fill-opacity="0.3"/>
<rect x="24.61" y="160.24" width="0.79" height="1.1" fill="#001080" fill-opacity="0.3"/>
<rect x="25.41" y="160.24" width="0.79" height="1.1" fill="#000000" fill-opacity="0.3"/>
<rect x="26.20" y="160.24" width="0.79" height="1.1" fill="#001080" fill-opacity="0.3"/>
<rect x="27.00" y="160.24" width="0.79" height="1.1" fill="#0431fa" fill-opacity="0.3"/>
<rect x="28.58" y="160.24" width="2.38" height="1.1" fill="#af00db" fill-opacity="0.3"/>
<rect x="31.76" y="160.24" width="0.79" height="1.1" fill="#001080" fill-opacity="0.3"/>
<rect x="33.35" y="160.24" width="1.59" height="1.1" fill="#af00db" fill-opacity="0.3"/>
<rect x="35.73" y="160.24" width="2.38" height="1.1" fill="#001080" fill-opacity="0.3"/>
<rect x="38.11" y="160.24" width="0.79" height="1.1" fill="#795e26" fill-opacity="0.3"/>
<rect x="38.91" y="160.24" width="0.79" height="1.1" fill="#008000" fill-opacity="0.3"/>
<rect x="40.49" y="160.24" width="1.59" height="1.1" fill="#000000" fill-opacity="0.3"/>
<rect x="42.88" y="160.24" width="4.76" height="1.1" fill="#001080" fill-opacity="0.3"/>
<rect x="47.64" y="160.24" width="0.79" height="1.1" fill="#008000" fill-opacity="0.3"/>
<rect x="48.43" y="160.24" width="0.79" height="1.1" fill="#001080" fill-opacity="0.3"/>
<rect x="49.23" y="160.24" width="0.79" height="1.1" fill="#008000" fill-opacity="0.3"/>
<rect x="50.02" y="160.24" width="0.79" height="1.1" fill="#008000" fill-opacity="0.3"/>
<rect x="50.82" y="160.24" width="7.15" height="1.1" fill="#a31515" fill-opacity="0.3"/>
<rect x="57.96" y="160.24" width="0.79" height="1.1" fill="#008000" fill-opacity="0.3"/>
<rect x="58.76" y="160.24" width="0.79" height="1.1" fill="#0431fa" fill-opacity="0.3"/>
<rect x="3.18" y="161.82" width="3.97" height="1.1" fill="#001080" fill-opacity="0.3"/>
<rect x="7.15" y="161.82" width="0.79" height="1.1" fill="#000000" fill-opacity="0.3"/>
<rect x="7.94" y="161.82" width="2.38" height="1.1" fill="#001080" fill-opacity="0.3"/>
<rect x="10.32" y="161.82" width="0.79" height="1.1" fill="#000000" fill-opacity="0.3"/>
<rect x="11.12" y="161.82" width="2.38" height="1.1" fill="#001080" fill-opacity="0.3"/>
<rect x="13.50" y="161.82" width="0.79" height="1.1" fill="#0431fa" fill-opacity="0.3"/>
<rect x="14.29" y="161.82" width="2.38" height="1.1" fill="#795e26" fill-opacity="0.3"/>
<rect x="16.67" y="161.82" width="0.79" height="1.1" fill="#008000" fill-opacity="0.3"/>
<rect x="17.47" y="161.82" width="0.79" height="1.1" fill="#795e26" fill-opacity="0.3"/>
<rect x="18.26" y="161.82" width="3.97" height="1.1" fill="#001080" fill-opacity="0.3"/>
<rect x="22.23" y="161.82" width="0.79" height="1.1" fill="#000000" fill-opacity="0.3"/>
<rect x="23.03" y="161.82" width="0.79" height="1.1" fill="#001080" fill-opacity="0.3"/>
<rect x="23.82" y="161.82" width="0.79" height="1.1" fill="#0431fa" fill-opacity="0.3"/>
<rect x="24.61" y="161.82" width="0.79" height="1.1" fill="#001080" fill-opacity="0.3"/>
<rect x="25.41" y="161.82" width="0.79" height="1.1" fill="#000000" fill-opacity="0.3"/>
<rect x="26.20" y="161.82" width="0.79" height="1.1" fill="#001080" fill-opacity="0.3"/>
<rect x="27.00" y="161.82" width="0.79" height="1.1" fill="#0431fa" fill-opacity="0.3"/>
<rect x="28.58" y="161.82" width="2.38" height="1.1" fill="#af00db" fill-opacity="0.3"/>
<rect x="31.76" y="161.82" width="0.79" height="1.1" fill="#001080" fill-opacity="0.3"/>
<rect x="33.35" y="161.82" width="1.59" height="1.1" fill="#af00db" fill-opacity="0.3"/>
<rect x="35.73" y="161.82" width="2.38" height="1.1" fill="#001080" fill-opacity="0.3"/>
<rect x="38.11" y="161.82" width="0.79" height="1.1" fill="#795e26" fill-opacity="0.3"/>
<rect x="38.91" y="161.82" width="0.79" height="1.1" fill="#008000" fill-opacity="0.3"/>
<rect x="40.49" y="161.82" width="1.59" height="1.1" fill="#000000" fill-opacity="0.3"/>
<rect x="42.88" y="161.82" width="4.76" height="1.1" fill="#001080" fill-opacity="0.3"/>
<rect x="47.64" y="161.82" width="0.79" height="1.1" fill="#008000" fill-opacity="0.3"/>
<rect x="48.43" y="161.82" width="0.79" height="1.1" fill="#001080" fill-opacity="0.3"/>
<rect x="49.23" y="161.82" width="0.79" height="1.1" fill="#008000" fill-opacity="0.3"/>
<rect x="50.02" y="161.82" width="0.79" height="1.1" fill="#008000" fill-opacity="0.3"/>
<rect x="50.82" y="161.82" width="7.15" height="1.1" fill="#a31515" fill-opacity="0.3"/>
<rect x="57.96" y="161.82" width="0.79" height="1.1" fill="#008000" fill-opacity="0.3"/>
<rect x="58.76" y="161.82" width="0.79" height="1.1" fill="#0431fa" fill-opacity="0.3"/>
<rect x="0.00" y="164.99" width="3.97" height="1.1" fill="#001080" fill-opacity="0.3"/>
<rect x="3.97" y="164.99" width="0.79" height="1.1" fill="#000000" fill-opacity="0.3"/>
<rect x="4.76" y="164.99" width="2.38" height="1.1" fill="#001080" fill-opacity="0.3"/>
<rect x="7.94" y="164.99" width="0.79" height="1.1" fill="#000000" fill-opacity="0.3"/>
<rect x="9.53" y="164.99" width="11.12" height="1.1" fill="#000000" fill-opacity="0.3"/>
<rect x="20.64" y="164.99" width="1.59" height="1.1" fill="#0431fa" fill-opacity="0.3"/>
<rect x="0.00" y="166.57" width="0.79" height="1.1" fill="#008000" fill-opacity="0.3"/>
<rect x="1.59" y="166.57" width="3.18" height="1.1" fill="#008000" fill-opacity="0.3"/>
<rect x="5.56" y="166.57" width="5.56" height="1.1" fill="#008000" fill-opacity="0.3"/>
<rect x="11.91" y="166.57" width="2.38" height="1.1" fill="#008000" fill-opacity="0.3"/>
<rect x="15.09" y="166.57" width="3.18" height="1.1" fill="#008000" fill-opacity="0.3"/>
<rect x="19.06" y="166.57" width="1.59" height="1.1" fill="#008000" fill-opacity="0.3"/>
<rect x="21.44" y="166.57" width="6.35" height="1.1" fill="#008000" fill-opacity="0.3"/>
<rect x="28.58" y="166.57" width="1.59" height="1.1" fill="#008000" fill-opacity="0.3"/>
<rect x="30.97" y="166.57" width="2.38" height="1.1" fill="#008000" fill-opacity="0.3"/>
<rect x="34.14" y="166.57" width="6.35" height="1.1" fill="#008000" fill-opacity="0.3"/>
<rect x="0.00" y="168.16" width="2.38" height="1.1" fill="#af00db" fill-opacity="0.3"/>
<rect x="3.18" y="168.16" width="0.79" height="1.1" fill="#001080" fill-opacity="0.3"/>
<rect x="4.76" y="168.16" width="1.59" height="1.1" fill="#af00db" fill-opacity="0.3"/>
<rect x="7.15" y="168.16" width="2.38" height="1.1" fill="#001080" fill-opacity="0.3"/>
<rect x="9.53" y="168.16" width="0.79" height="1.1" fill="#000000" fill-opacity="0.3"/>
<rect x="3.18" y="169.75" width="3.97" height="1.1" fill="#001080" fill-opacity="0.3"/>
<rect x="7.15" y="169.75" width="0.79" height="1.1" fill="#000000" fill-opacity="0.3"/>
<rect x="7.94" y="169.75" width="2.38" height="1.1" fill="#001080" fill-opacity="0.3"/>
<rect x="10.32" y="169.75" width="0.79" height="1.1" fill="#000000" fill-opacity="0.3"/>
<rect x="11.12" y="169.75" width="2.38" height="1.1" fill="#001080" fill-opacity="0.3"/>
<rect x="13.50" y="169.75" width="0.79" height="1.1" fill="#0431fa" fill-opacity="0.3"/>
<rect x="14.29" y="169.75" width="2.38" height="1.1" fill="#795e26" fill-opacity="0.3"/>
<rect x="16.67" y="169.75" width="0.79" height="1.1" fill="#008000" fill-opacity="0.3"/>
<rect x="17.47" y="169.75" width="0.79" height="1.1" fill="#795e26" fill-opacity="0.3"/>
<rect x="18.26" y="169.75" width="3.97" height="1.1" fill="#001080" fill-opacity="0.3"/>
<rect x="22.23" y="169.75" width="0.79" height="1.1" fill="#000000" fill-opacity="0.3"/>
<rect x="23.03" y="169.75" width="0.79" height="1.1" fill="#001080" fill-opacity="0.3"/>
<rect x="23.82" y="169.75" width="0.79" height="1.1" fill="#0431fa" fill-opacity="0.3"/>
<rect x="24.61" y="169.75" width="0.79" height="1.1" fill="#001080" fill-opacity="0.3"/>
<rect x="25.41" y="169.75" width="0.79" height="1.1" fill="#000000" fill-opacity="0.3"/>
<rect x="26.20" y="169.75" width="0.79" height="1.1" fill="#001080" fill-opacity="0.3"/>
<rect x="27.00" y="169.75" width="0.79" height="1.1" fill="#0431fa" fill-opacity="0.3"/>
<rect x="28.58" y="169.75" width="2.38" height="1.1" fill="#af00db" fill-opacity="0.3"/>
<rect x="31.76" y="169.75" width="0.79" height="1.1" fill="#001080" fill-opacity="0.3"/>
<rect x="33.35" y="169.75" width="1.59" height="1.1" fill="#af00db" fill-opacity="0.3"/>
<rect x="35.73" y="169.75" width="2.38" height="1.1" fill="#001080" fill-opacity="0.3"/>
<rect x="38.11" y="169.75" width="0.79" height="1.1" fill="#795e26" fill-opacity="0.3"/>
<rect x="38.91" y="169.75" width="0.79" height="1.1" fill="#008000" fill-opacity="0.3"/>
<rect x="40.49" y="169.75" width="1.59" height="1.1" fill="#000000" fill-opacity="0.3"/>
<rect x="42.88" y="169.75" width="4.76" height="1.1" fill="#001080" fill-opacity="0.3"/>
<rect x="47.64" y="169.75" width="0.79" height="1.1" fill="#008000" fill-opacity="0.3"/>
<rect x="48.43" y="169.75" width="0.79" height="1.1" fill="#001080" fill-opacity="0.3"/>
<rect x="49.23" y="169.75" width="0.79" height="1.1" fill="#008000" fill-opacity="0.3"/>
<rect x="50.02" y="169.75" width="0.79" height="1.1" fill="#0431fa" fill-opacity="0.3"/>
<rect x="0.00" y="172.91" width="2.38" height="1.1" fill="#a31515" fill-opacity="0.3"/>
<rect x="3.18" y="174.50" width="3.97" height="1.1" fill="#a31515" fill-opacity="0.3"/>
<rect x="7.94" y="174.50" width="1.59" height="1.1" fill="#a31515" fill-opacity="0.3"/>
<rect x="10.32" y="174.50" width="1.59" height="1.1" fill="#a31515" fill-opacity="0.3"/>
<rect x="12.70" y="174.50" width="3.18" height="1.1" fill="#a31515" fill-opacity="0.3"/>
<rect x="16.67" y="174.50" width="1.59" height="1.1" fill="#a31515" fill-opacity="0.3"/>
<rect x="19.06" y="174.50" width="2.38" height="1.1" fill="#a31515" fill-opacity="0.3"/>
<rect x="22.23" y="174.50" width="0.79" height="1.1" fill="#a31515" fill-opacity="0.3"/>
<rect x="23.82" y="174.50" width="7.94" height="1.1" fill="#a31515" fill-opacity="0.3"/>
<rect x="32.55" y="174.50" width="2.38" height="1.1" fill="#a31515" fill-opacity="0.3"/>
<rect x="35.73" y="174.50" width="2.38" height="1.1" fill="#a31515" fill-opacity="0.3"/>
<rect x="38.91" y="174.50" width="10.32" height="1.1" fill="#a31515" fill-opacity="0.3"/>
<rect x="50.02" y="174.50" width="3.18" height="1.1" fill="#a31515" fill-opacity="0.3"/>
<rect x="53.99" y="174.50" width="7.15" height="1.1" fill="#a31515" fill-opacity="0.3"/>
<rect x="3.18" y="176.09" width="2.38" height="1.1" fill="#a31515" fill-opacity="0.3"/>
<rect x="6.35" y="176.09" width="2.38" height="1.1" fill="#a31515" fill-opacity="0.3"/>
<rect x="9.53" y="176.09" width="8.73" height="1.1" fill="#a31515" fill-opacity="0.3"/>
<rect x="19.85" y="176.09" width="1.59" height="1.1" fill="#a31515" fill-opacity="0.3"/>
<rect x="22.23" y="176.09" width="2.38" height="1.1" fill="#a31515" fill-opacity="0.3"/>
<rect x="25.41" y="176.09" width="5.56" height="1.1" fill="#a31515" fill-opacity="0.3"/>
<rect x="31.76" y="176.09" width="6.35" height="1.1" fill="#a31515" fill-opacity="0.3"/>
<rect x="38.91" y="176.09" width="3.18" height="1.1" fill="#a31515" fill-opacity="0.3"/>
<rect x="42.88" y="176.09" width="3.18" height="1.1" fill="#a31515" fill-opacity="0.3"/>
<rect x="46.85" y="176.09" width="1.59" height="1.1" fill="#a31515" fill-opacity="0.3"/>
<rect x="49.23" y="176.09" width="6.35" height="1.1" fill="#a31515" fill-opacity="0.3"/>
<rect x="3.18" y="177.67" width="2.38" height="1.1" fill="#a31515" fill-opacity="0.3"/>
<rect x="6.35" y="177.67" width="4.76" height="1.1" fill="#a31515" fill-opacity="0.3"/>
<rect x="11.91" y="177.67" width="8.73" height="1.1" fill="#a31515" fill-opacity="0.3"/>
<rect x="21.44" y="177.67" width="5.56" height="1.1" fill="#a31515" fill-opacity="0.3"/>
<rect x="28.58" y="177.67" width="1.59" height="1.1" fill="#a31515" fill-opacity="0.3"/>
<rect x="30.97" y="177.67" width="2.38" height="1.1" fill="#a31515" fill-opacity="0.3"/>
<rect x="34.14" y="177.67" width="5.56" height="1.1" fill="#a31515" fill-opacity="0.3"/>
<rect x="40.49" y="177.67" width="3.97" height="1.1" fill="#a31515" fill-opacity="0.3"/>
<rect x="45.26" y="177.67" width="5.56" height="1.1" fill="#a31515" fill-opacity="0.3"/>
<rect x="51.61" y="177.67" width="1.59" height="1.1" fill="#a31515" fill-opacity="0.3"/>
<rect x="53.99" y="177.67" width="2.38" height="1.1" fill="#a31515" fill-opacity="0.3"/>
<rect x="3.18" y="179.25" width="6.35" height="1.1" fill="#a31515" fill-opacity="0.3"/>
<rect x="10.32" y="179.25" width="3.97" height="1.1" fill="#a31515" fill-opacity="0.3"/>
<rect x="15.09" y="179.25" width="4.76" height="1.1" fill="#a31515" fill-opacity="0.3"/>
<rect x="20.64" y="179.25" width="3.18" height="1.1" fill="#a31515" fill-opacity="0.3"/>
<rect x="24.61" y="179.25" width="1.59" height="1.1" fill="#a31515" fill-opacity="0.3"/>
<rect x="27.00" y="179.25" width="3.18" height="1.1" fill="#a31515" fill-opacity="0.3"/>
<rect x="30.97" y="179.25" width="6.35" height="1.1" fill="#a31515" fill-opacity="0.3"/>
<rect x="38.11" y="179.25" width="1.59" height="1.1" fill="#a31515" fill-opacity="0.3"/>
<rect x="40.49" y="179.25" width="2.38" height="1.1" fill="#a31515" fill-opacity="0.3"/>
<rect x="43.67" y="179.25" width="9.53" height="1.1" fill="#a31515" fill-opacity="0.3"/>
<rect x="53.99" y="179.25" width="7.15" height="1.1" fill="#a31515" fill-opacity="0.3"/>
<rect x="0.00" y="180.84" width="2.38" height="1.1" fill="#a31515" fill-opacity="0.3"/>
<rect x="0.00" y="184.01" width="3.97" height="1.1" fill="#795e26" fill-opacity="0.3"/>
<rect x="3.97" y="184.01" width="0.79" height="1.1" fill="#0431fa" fill-opacity="0.3"/>
<rect x="4.76" y="184.01" width="6.35" height="1.1" fill="#a31515" fill-opacity="0.3"/>
<rect x="11.91" y="184.01" width="2.38" height="1.1" fill="#a31515" fill-opacity="0.3"/>
<rect x="15.09" y="184.01" width="4.76" height="1.1" fill="#a31515" fill-opacity="0.3"/>
<rect x="19.85" y="184.01" width="0.79" height="1.1" fill="#0431fa" fill-opacity="0.3"/>
<rect x="0.00" y="187.18" width="0.79" height="1.1" fill="#008000" fill-opacity="0.3"/>
<rect x="1.59" y="187.18" width="2.38" height="1.1" fill="#008000" fill-opacity="0.3"/>
<rect x="4.76" y="187.18" width="2.38" height="1.1" fill="#008000" fill-opacity="0.3"/>
<rect x="7.94" y="187.18" width="2.38" height="1.1" fill="#008000" fill-opacity="0.3"/>
<rect x="11.12" y="187.18" width="4.76" height="1.1" fill="#008000" fill-opacity="0.3"/>
<rect x="16.67" y="187.18" width="2.38" height="1.1" fill="#008000" fill-opacity="0.3"/>
<rect x="19.85" y="187.18" width="3.97" height="1.1" fill="#008000" fill-opacity="0.3"/>
<rect x="24.61" y="187.18" width="2.38" height="1.1" fill="#008000" fill-opacity="0.3"/>
<rect x="27.79" y="187.18" width="3.97" height="1.1" fill="#008000" fill-opacity="0.3"/>
<rect x="0.00" y="188.77" width="5.56" height="1.1" fill="#001080" fill-opacity="0.3"/>
<rect x="6.35" y="188.77" width="0.79" height="1.1" fill="#000000" fill-opacity="0.3"/>
<rect x="7.94" y="188.77" width="10.32" height="1.1" fill="#000000" fill-opacity="0.3"/>
<rect x="18.26" y="188.77" width="0.79" height="1.1" fill="#0431fa" fill-opacity="0.3"/>
<rect x="19.06" y="188.77" width="3.97" height="1.1" fill="#a31515" fill-opacity="0.3"/>
<rect x="23.03" y="188.77" width="0.79" height="1.1" fill="#0431fa" fill-opacity="0.3"/>
<rect x="23.82" y="188.77" width="4.76" height="1.1" fill="#000000" fill-opacity="0.3"/>
<rect x="28.58" y="188.77" width="0.79" height="1.1" fill="#0431fa" fill-opacity="0.3"/>
<rect x="29.38" y="188.77" width="3.97" height="1.1" fill="#001080" fill-opacity="0.3"/>
<rect x="33.35" y="188.77" width="0.79" height="1.1" fill="#0431fa" fill-opacity="0.3"/>
<rect x="0.00" y="191.94" width="0.79" height="1.1" fill="#008000" fill-opacity="0.3"/>
<rect x="1.59" y="191.94" width="2.38" height="1.1" fill="#008000" fill-opacity="0.3"/>
<rect x="4.76" y="191.94" width="0.79" height="1.1" fill="#008000" fill-opacity="0.3"/>
<rect x="6.35" y="191.94" width="1.59" height="1.1" fill="#008000" fill-opacity="0.3"/>
<rect x="8.73" y="191.94" width="3.18" height="1.1" fill="#008000" fill-opacity="0.3"/>
<rect x="0.00" y="193.52" width="0.79" height="1.1" fill="#008000" fill-opacity="0.3"/>
<rect x="4.76" y="193.52" width="2.38" height="1.1" fill="#008000" fill-opacity="0.3"/>
<rect x="7.94" y="193.52" width="0.79" height="1.1" fill="#008000" fill-opacity="0.3"/>
<rect x="9.53" y="193.52" width="1.59" height="1.1" fill="#008000" fill-opacity="0.3"/>
<rect x="11.91" y="193.52" width="3.18" height="1.1" fill="#008000" fill-opacity="0.3"/>
<rect x="0.00" y="195.10" width="0.79" height="1.1" fill="#008000" fill-opacity="0.3"/>
<rect x="7.94" y="195.10" width="6.35" height="1.1" fill="#008000" fill-opacity="0.3"/>
<rect x="15.09" y="195.10" width="1.59" height="1.1" fill="#008000" fill-opacity="0.3"/>
<rect x="17.47" y="195.10" width="11.91" height="1.1" fill="#008000" fill-opacity="0.3"/>
<rect x="0.00" y="198.28" width="0.79" height="1.1" fill="#008000" fill-opacity="0.3"/>
<rect x="1.59" y="198.28" width="1.59" height="1.1" fill="#008000" fill-opacity="0.3"/>
<rect x="3.97" y="198.28" width="2.38" height="1.1" fill="#008000" fill-opacity="0.3"/>
<rect x="7.15" y="198.28" width="3.97" height="1.1" fill="#008000" fill-opacity="0.3"/>
<rect x="11.91" y="198.28" width="4.76" height="1.1" fill="#008000" fill-opacity="0.3"/>
<rect x="17.47" y="198.28" width="7.15" height="1.1" fill="#008000" fill-opacity="0.3"/>
<rect x="0.00" y="199.86" width="1.59" height="1.1" fill="#af00db" fill-opacity="0.3"/>
<rect x="2.38" y="199.86" width="3.18" height="1.1" fill="#a31515" fill-opacity="0.3"/>
<rect x="6.35" y="199.86" width="1.59" height="1.1" fill="#000000" fill-opacity="0.3"/>
<rect x="8.73" y="199.86" width="2.38" height="1.1" fill="#267f99" fill-opacity="0.3"/>
<rect x="11.12" y="199.86" width="0.79" height="1.1" fill="#0431fa" fill-opacity="0.3"/>
<rect x="11.91" y="199.86" width="5.56" height="1.1" fill="#001080" fill-opacity="0.3"/>
<rect x="17.47" y="199.86" width="11.12" height="1.1" fill="#000000" fill-opacity="0.3"/>
<rect x="28.58" y="199.86" width="0.79" height="1.1" fill="#0431fa" fill-opacity="0.3"/>
<rect x="29.38" y="199.86" width="0.79" height="1.1" fill="#000000" fill-opacity="0.3"/>
<rect x="3.18" y="201.44" width="3.97" height="1.1" fill="#795e26" fill-opacity="0.3"/>
<rect x="7.15" y="201.44" width="0.79" height="1.1" fill="#0431fa" fill-opacity="0.3"/>
<rect x="7.94" y="201.44" width="7.94" height="1.1" fill="#a31515" fill-opacity="0.3"/>
<rect x="16.67" y="201.44" width="6.35" height="1.1" fill="#a31515" fill-opacity="0.3"/>
<rect x="23.82" y="201.44" width="0.79" height="1.1" fill="#a31515" fill-opacity="0.3"/>
<rect x="25.41" y="201.44" width="0.79" height="1.1" fill="#a31515" fill-opacity="0.3"/>
<rect x="26.20" y="201.44" width="0.79" height="1.1" fill="#000000" fill-opacity="0.3"/>
<rect x="27.79" y="201.44" width="3.97" height="1.1" fill="#001080" fill-opacity="0.3"/>
<rect x="31.76" y="201.44" width="3.97" height="1.1" fill="#000000" fill-opacity="0.3"/>
<rect x="35.73" y="201.44" width="1.59" height="1.1" fill="#008000" fill-opacity="0.3"/>
<rect x="37.32" y="201.44" width="0.79" height="1.1" fill="#0431fa" fill-opacity="0.3"/>
<rect x="3.18" y="203.03" width="3.97" height="1.1" fill="#795e26" fill-opacity="0.3"/>
<rect x="7.15" y="203.03" width="0.79" height="1.1" fill="#0431fa" fill-opacity="0.3"/>
<rect x="7.94" y="203.03" width="8.73" height="1.1" fill="#a31515" fill-opacity="0.3"/>
<rect x="17.47" y="203.03" width="2.38" height="1.1" fill="#a31515" fill-opacity="0.3"/>
<rect x="20.64" y="203.03" width="5.56" height="1.1" fill="#a31515" fill-opacity="0.3"/>
<rect x="27.00" y="203.03" width="1.59" height="1.1" fill="#a31515" fill-opacity="0.3"/>
<rect x="29.38" y="203.03" width="6.35" height="1.1" fill="#a31515" fill-opacity="0.3"/>
<rect x="35.73" y="203.03" width="0.79" height="1.1" fill="#0431fa" fill-opacity="0.3"/>
<rect x="37.32" y="203.03" width="0.79" height="1.1" fill="#008000" fill-opacity="0.3"/>
<rect x="38.91" y="203.03" width="3.18" height="1.1" fill="#008000" fill-opacity="0.3"/>
<rect x="42.88" y="203.03" width="1.59" height="1.1" fill="#008000" fill-opacity="0.3"/>
<rect x="45.26" y="203.03" width="3.97" height="1.1" fill="#008000" fill-opacity="0.3"/>
<rect x="50.02" y="203.03" width="1.59" height="1.1" fill="#008000" fill-opacity="0.3"/>
<rect x="52.40" y="203.03" width="4.76" height="1.1" fill="#008000" fill-opacity="0.3"/>
<rect x="57.96" y="203.03" width="1.59" height="1.1" fill="#008000" fill-opacity="0.3"/>
<rect x="60.34" y="203.03" width="3.97" height="1.1" fill="#008000" fill-opacity="0.3"/>
<rect x="65.11" y="203.03" width="2.38" height="1.1" fill="#008000" fill-opacity="0.3"/>
<rect x="68.28" y="203.03" width="5.56" height="1.1" fill="#008000" fill-opacity="0.3"/>
<rect x="74.64" y="203.03" width="6.35" height="1.1" fill="#008000" fill-opacity="0.3"/>
<rect x="81.78" y="203.03" width="1.59" height="1.1" fill="#008000" fill-opacity="0.3"/>
<rect x="84.16" y="203.03" width="0.79" height="1.1" fill="#008000" fill-opacity="0.3"/>
<rect x="85.75" y="203.03" width="6.35" height="1.1" fill="#008000" fill-opacity="0.3"/>
<rect x="3.18" y="206.20" width="0.79" height="1.1" fill="#008000" fill-opacity="0.3"/>
<rect x="4.76" y="206.20" width="13.50" height="1.1" fill="#008000" fill-opacity="0.3"/>
<rect x="6.35" y="207.78" width="3.18" height="1.1" fill="#af00db" fill-opacity="0.3"/>
<rect x="10.32" y="207.78" width="8.73" height="1.1" fill="#001080" fill-opacity="0.3"/>
<rect x="9.53" y="210.96" width="17.47" height="1.1" fill="#001080" fill-opacity="0.3"/>
<rect x="12.70" y="212.54" width="24.61" height="1.1" fill="#001080" fill-opacity="0.3"/>
<rect x="38.11" y="212.54" width="14.29" height="1.1" fill="#008000" fill-opacity="0.3"/>
<rect x="12.70" y="214.12" width="15.88" height="1.1" fill="#001080" fill-opacity="0.3"/>
<rect x="12.70" y="215.71" width="22.23" height="1.1" fill="#001080" fill-opacity="0.3"/>
<rect x="15.88" y="218.88" width="12.70" height="1.1" fill="#a31515" fill-opacity="0.3"/>
<rect x="15.88" y="220.47" width="12.70" height="1.1" fill="#a31515" fill-opacity="0.3"/>
<rect x="29.38" y="220.47" width="3.18" height="1.1" fill="#0431fa" fill-opacity="0.3"/>
<rect x="19.85" y="222.05" width="10.32" height="1.1" fill="#a31515" fill-opacity="0.3"/>
<rect x="30.97" y="222.05" width="2.38" height="1.1" fill="#0431fa" fill-opacity="0.3"/>
<rect x="12.70" y="225.22" width="16.67" height="1.1" fill="#000000" fill-opacity="0.3"/>
<rect x="30.17" y="225.22" width="10.32" height="1.1" fill="#001080" fill-opacity="0.3"/>
<rect x="3.18" y="229.97" width="41.29" height="1.1" fill="#001080" fill-opacity="0.3"/>
<rect x="45.26" y="229.97" width="11.91" height="1.1" fill="#a31515" fill-opacity="0.3"/>
<rect x="3.18" y="233.15" width="4.76" height="1.1" fill="#af00db" fill-opacity="0.3"/>
<rect x="8.73" y="233.15" width="7.15" height="1.1" fill="#a31515" fill-opacity="0.3"/>
<rect x="9.53" y="234.73" width="68.28" height="1.1" fill="#a31515" fill-opacity="0.3"/>
<rect x="9.53" y="237.90" width="14.29" height="1.1" fill="#a31515" fill-opacity="0.3"/>
<rect x="3.18" y="239.49" width="3.18" height="1.1" fill="#000000" fill-opacity="0.3"/>
<rect x="3.18" y="242.66" width="11.91" height="1.1" fill="#001080" fill-opacity="0.3"/>
<rect x="6.35" y="244.24" width="69.87" height="1.1" fill="#0431fa" fill-opacity="0.3"/>
<rect x="6.35" y="245.82" width="65.11" height="1.1" fill="#001080" fill-opacity="0.3"/>
<rect x="6.35" y="250.58" width="52.40" height="1.1" fill="#000000" fill-opacity="0.3"/>
<rect x="6.35" y="253.75" width="3.18" height="1.1" fill="#af00db" fill-opacity="0.3"/>
<rect x="12.70" y="256.92" width="12.70" height="1.1" fill="#a31515" fill-opacity="0.3"/>
<rect x="12.70" y="258.50" width="7.94" height="1.1" fill="#a31515" fill-opacity="0.3"/>
<rect x="15.88" y="260.09" width="11.12" height="1.1" fill="#a31515" fill-opacity="0.3"/>
<rect x="19.85" y="261.67" width="15.09" height="1.1" fill="#a31515" fill-opacity="0.3"/>
<rect x="9.53" y="264.84" width="3.97" height="1.1" fill="#000000" fill-opacity="0.3"/>
<rect x="6.35" y="268.01" width="32.55" height="1.1" fill="#008000" fill-opacity="0.3"/>
<rect x="6.35" y="269.60" width="32.55" height="1.1" fill="#001080" fill-opacity="0.3"/>
<rect x="3.18" y="272.77" width="37.32" height="1.1" fill="#008000" fill-opacity="0.3"/>
<rect x="3.18" y="274.35" width="5.56" height="1.1" fill="#af00db" fill-opacity="0.3"/>
<rect x="9.53" y="274.35" width="43.67" height="1.1" fill="#0431fa" fill-opacity="0.3"/>
<rect x="6.35" y="275.94" width="38.11" height="1.1" fill="#001080" fill-opacity="0.3"/>
<rect x="3.18" y="279.11" width="16.67" height="1.1" fill="#008000" fill-opacity="0.3"/>
<rect x="3.18" y="280.69" width="4.76" height="1.1" fill="#af00db" fill-opacity="0.3"/>
<rect x="8.73" y="280.69" width="16.67" height="1.1" fill="#a31515" fill-opacity="0.3"/>
<rect x="26.20" y="280.69" width="16.67" height="1.1" fill="#001080" fill-opacity="0.3"/>
<rect x="6.35" y="283.86" width="23.03" height="1.1" fill="#001080" fill-opacity="0.3"/>
<rect x="6.35" y="287.03" width="18.26" height="1.1" fill="#001080" fill-opacity="0.3"/>
<rect x="9.53" y="288.62" width="11.12" height="1.1" fill="#001080" fill-opacity="0.3"/>
<rect x="9.53" y="290.20" width="30.97" height="1.1" fill="#001080" fill-opacity="0.3"/>
<rect x="9.53" y="293.37" width="3.18" height="1.1" fill="#000000" fill-opacity="0.3"/>
<rect x="12.70" y="294.96" width="14.29" height="1.1" fill="#a31515" fill-opacity="0.3"/>
<rect x="12.70" y="296.54" width="10.32" height="1.1" fill="#a31515" fill-opacity="0.3"/>
<rect x="12.70" y="298.13" width="16.67" height="1.1" fill="#a31515" fill-opacity="0.3"/>
<rect x="15.88" y="299.71" width="12.70" height="1.1" fill="#a31515" fill-opacity="0.3"/>
<rect x="9.53" y="301.30" width="17.47" height="1.1" fill="#000000" fill-opacity="0.3"/>
<rect x="9.53" y="304.47" width="24.61" height="1.1" fill="#001080" fill-opacity="0.3"/>
<rect x="9.53" y="307.64" width="4.76" height="1.1" fill="#af00db" fill-opacity="0.3"/>
<rect x="12.70" y="309.22" width="15.09" height="1.1" fill="#001080" fill-opacity="0.3"/>
<rect x="9.53" y="312.39" width="15.88" height="1.1" fill="#001080" fill-opacity="0.3"/>
<rect x="26.20" y="312.39" width="23.03" height="1.1" fill="#a31515" fill-opacity="0.3"/>
<rect x="6.35" y="315.56" width="36.52" height="1.1" fill="#001080" fill-opacity="0.3"/>
<rect x="6.35" y="317.15" width="27.00" height="1.1" fill="#001080" fill-opacity="0.3"/>
<rect x="34.14" y="317.15" width="23.03" height="1.1" fill="#008000" fill-opacity="0.3"/>
<rect x="9.53" y="318.73" width="30.17" height="1.1" fill="#001080" fill-opacity="0.3"/>
<rect x="0.00" y="321.90" width="3.18" height="1.1" fill="#000000" fill-opacity="0.3"/>
<rect x="3.18" y="323.49" width="27.00" height="1.1" fill="#795e26" fill-opacity="0.3"/>
<rect x="0.00" y="326.66" width="29.38" height="1.1" fill="#001080" fill-opacity="0.3"/>
<rect x="0.00" y="328.24" width="92.10" height="1.1" fill="#008000" fill-opacity="0.3"/>
<rect x="0.00" y="331.41" width="9.53" height="1.1" fill="#001080" fill-opacity="0.3"/>
<rect x="0.00" y="333.00" width="7.94" height="1.1" fill="#001080" fill-opacity="0.3"/>
<rect x="0.00" y="336.17" width="15.09" height="1.1" fill="#001080" fill-opacity="0.3"/>
<rect x="3.18" y="337.75" width="22.23" height="1.1" fill="#a31515" fill-opacity="0.3"/>
<rect x="26.20" y="337.75" width="18.26" height="1.1" fill="#001080" fill-opacity="0.3"/>
</svg>

<!-- panel -->
<div class="a" style="left:213px;top:501px;width:787px;height:76px;background:#fff;border-top:1px solid #d4d4d4"></div>
<div class="pt" style="left:228.5px;top:511.5px">PROBLEMAS</div>
<div class="a" style="left:290px;top:509px;width:17.5px;height:14px;border-radius:7px;background:#c4c4c4"></div>
<div class="t" style="left:293.4px;top:512px;font-size:9px;color:#444">12</div>
<div class="pt" style="left:325px;top:511.5px">SALIDA</div>
<div class="pt" style="left:375.5px;top:511.5px">CONSOLA DE DEPURACIÓN</div>
<div class="pt" style="left:511px;top:511.5px;color:#424242">TERMINAL</div>
<div class="a" style="left:509px;top:525px;width:48px;height:1px;background:#424242"></div>
<div class="pt" style="left:574.5px;top:511.5px">JUPYTER</div>
<svg width="140" height="16" style="left:860px;top:508px" fill="none" stroke="#5a5a5a" stroke-width="0.9">
 <rect x="2.5" y="2.5" width="11" height="11" rx="1.5"/><path d="M6.5 5.5 L9 8 L6.5 10.5"/>
 <path d="M46 2.5 V13.5 M40.5 8 H51.5"/>
 <path d="M57 7 L59.2 9.2 L61.4 7" stroke-width="0.8"/>
 <rect x="72.5" y="2.5" width="10.5" height="10.5" rx="1"/><path d="M77.75 2.5 V13"/>
 <path d="M93.5 4.5 H101.5 M95.5 4.5 V3 H99.5 V4.5 M94.5 4.5 V12.5 Q94.5 13.5 95.5 13.5 H99.5 Q100.5 13.5 100.5 12.5 V4.5 M96.5 6.5 V11.5 M98.5 6.5 V11.5"/>
 <path d="M114.5 10.5 L118.7 6.3 L122.9 10.5"/>
 <path d="M132.5 4 L139 10.5 M139 4 L132.5 10.5" />
</svg>
<div class="t" style="left:877px;top:512px;font-size:9px;color:#555">zsh</div>
<!-- terminal -->
<svg width="8" height="8" style="left:217.5px;top:533px" fill="none" stroke="#a0a0a0" stroke-width="0.9"><circle cx="3.5" cy="3.5" r="2.6"/></svg>
<div class="t" style="left:229px;top:533.3px;font-family:'Liberation Mono',monospace;font-size:9.3px;color:#333;-webkit-text-stroke:0.15px #333">rhysd@Rhyss-MacBook-Pro optimisation %</div>

<!-- status bar -->
<div class="a" style="left:0;top:577px;width:1000px;height:17px;background:#007acc;overflow:hidden">
 <div class="a" style="left:0;top:0;width:26px;height:17px;background:#16825d"></div>
 <svg width="26" height="17" style="left:0;top:0" fill="none" stroke="#fff" stroke-width="1"><path d="M8.6 7.6 L11.6 9.8 L9.4 12.6 M16.2 5 L13.4 7.6 L15.8 9.9"/></svg>
 <svg width="50" height="17" style="left:30px;top:0" fill="none" stroke="#fff" stroke-width="0.95">
  <circle cx="7.9" cy="8.5" r="4.6"/><path d="M6 6.6 L9.8 10.4 M9.8 6.6 L6 10.4"/>
  <path d="M30.8 3.8 L36 12.8 H25.6 Z M30.8 7 V9.8 M30.8 11 V11.5"/>
 </svg>
 <div class="st" style="left:46px">0</div>
 <div class="st" style="left:68.5px">12</div>
 <div class="st" style="left:508px">Lín. 137, col. 15</div>
 <div class="st" style="left:589px;letter-spacing:0.25px">Espacios: 4</div>
 <div class="st" style="left:653.5px;letter-spacing:0.65px">UTF-8</div>
 <div class="st" style="left:695.5px">LF</div>
 <svg width="14" height="17" style="left:717px;top:0" fill="none" stroke="#fff" stroke-width="1"><path d="M4.2 4.5 Q3 4.5 3 5.8 V7.6 L2 8.6 L3 9.6 V11.4 Q3 12.7 4.2 12.7 M9.8 4.5 Q11 4.5 11 5.8 V8"/><circle cx="11" cy="11.2" r="1.5"/></svg>
 <div class="st" style="left:733.5px;letter-spacing:0.65px">Python</div>
 <div class="st" style="left:777.5px;letter-spacing:0.55px">3.9.6 64-bit</div>
 <svg width="12" height="17" style="left:844px;top:0" fill="none" stroke="#fff" stroke-width="0.95"><circle cx="5.5" cy="7" r="1.5"/><path d="M2.6 10 A4.2 4.2 0 1 1 8.4 10 M5.5 9 V14"/></svg>
 <div class="st" style="left:857.5px">Go Live</div>
 <svg width="12" height="17" style="left:904px;top:0" fill="none" stroke="#fff" stroke-width="1"><path d="M1 9 L4 12 L10 4.5"/></svg>
 <div class="st" style="left:917.5px;letter-spacing:0.43px">Prettier</div>
 <svg width="14" height="17" style="left:963px;top:0" fill="none" stroke="#fff" stroke-width="0.95"><circle cx="5.5" cy="6" r="2.4"/><path d="M1.5 13 Q2 9.5 5.5 9.5 L8 12.5 M7.5 3 H12.5 V8 H10"/></svg>
 <svg width="12" height="17" style="left:988px;top:0" fill="none" stroke="#fff" stroke-width="0.95"><path d="M2 11.5 H10 L9 10 V7 Q9 3.8 6 3.8 Q3 3.8 3 7 V10 Z M5 13 H7"/></svg>
</div>
</body></html>
